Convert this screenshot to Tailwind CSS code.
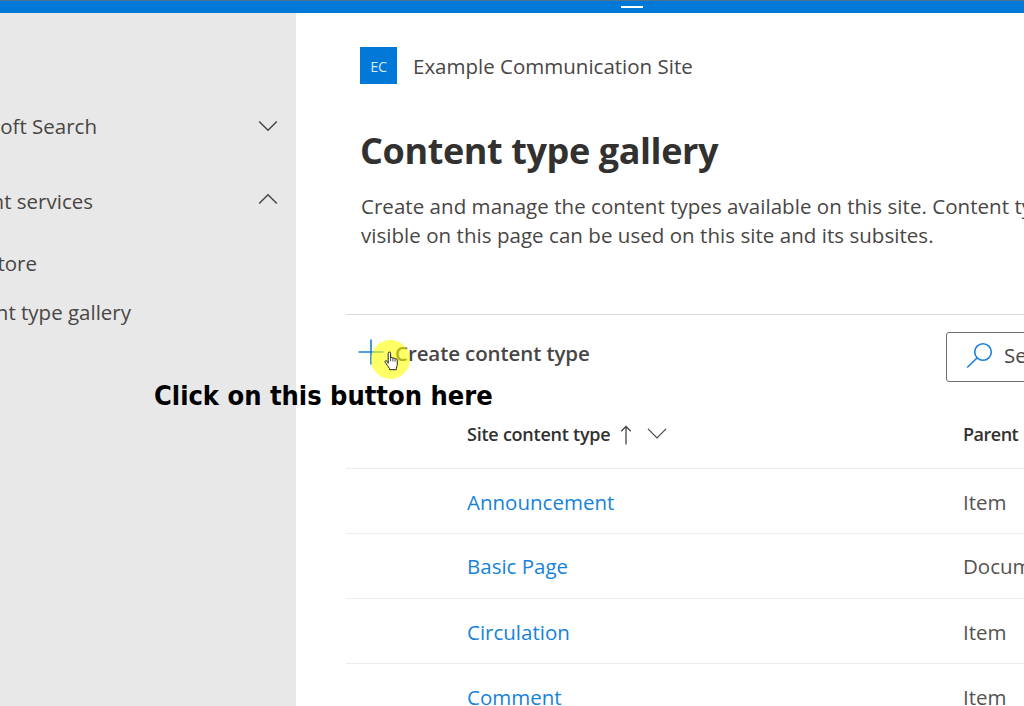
<!DOCTYPE html>
<html lang="en">

<head>
    <meta charset="UTF-8">
    <meta name="viewport" content="width=device-width, initial-scale=1.0">
    <title>Content type gallery</title>
    <script src="https://cdn.jsdelivr.net/npm/@tailwindcss/browser@4"></script>
</head>

<body class="relative h-[706px] w-[1024px] overflow-hidden bg-white font-['Open_Sans',sans-serif] text-[20.5px] leading-[29px] text-[#484644] whitespace-nowrap flex flex-col">

    <!-- top bar -->
    <header class="h-[13px] shrink-0 bg-[#0078d7] border-t border-[#4a7291] pl-[621px] pt-[5px]">
        <div class="h-[2px] w-[22px] bg-white"></div>
    </header>

    <div class="flex grow min-h-0">
        <!-- side navigation -->
        <nav class="w-[296px] shrink-0 overflow-hidden bg-[#e8e8e8] pt-[76px]">
            <div class="flex h-[75px] items-center justify-between pr-[18px]">
                <span class="flex w-[97px] justify-end">Microsoft Search</span>
                <svg class="mb-[2px] h-5 w-5" viewBox="0 0 20 20" fill="none" stroke="#484644" stroke-width="1.5"><path d="M1.2 5.5 10 14.3 18.8 5.5" /></svg>
            </div>
            <div class="flex h-[74px] items-center justify-between pr-[18px]">
                <span class="flex w-[93px] justify-end">Content services</span>
                <svg class="mb-[2px] h-5 w-5" viewBox="0 0 20 20" fill="none" stroke="#484644" stroke-width="1.5"><path d="M1.2 13.5 10 4.7 18.8 13.5" /></svg>
            </div>
            <div class="flex h-[50px] items-center">
                <span class="flex w-[37px] justify-end">Term store</span>
            </div>
            <div class="flex h-[48px] items-center">
                <span class="flex w-[131px] justify-end">Content type gallery</span>
            </div>
        </nav>

        <main class="w-[728px] shrink-0 overflow-hidden pl-[50px]">
            <div class="flex h-[37px] mt-[34px] ml-[14px] items-center gap-4">
                <div class="flex size-[37px] items-center justify-center bg-[#0078d7] pt-px text-[14.5px] tracking-[-0.3px] text-[#d5eafa]">EC</div>
                <span class="pt-px">Example Communication Site</span>
            </div>
            <h1 class="mt-[42px] ml-[14px] h-[50px] text-[36px] leading-[50px] font-bold tracking-[-0.4px] text-[#323130]">Content type gallery</h1>
            <p class="mt-[16px] ml-[15px] h-[122px] tracking-[0.04px]">Create and manage the content types available on this site. Content types<br>visible on this page can be used on this site and its subsites.</p>

            <!-- command bar -->
            <div class="flex h-[86px] border-t border-[#d9d9d9] pt-[17px]">
                <button class="flex h-[42px] w-[600px] shrink-0 items-center pl-[12px] font-semibold tracking-[-0.1px]">
                    <svg class="mb-[2px] h-[26px] w-[26px]" viewBox="0 0 26 26" fill="none" stroke="#1b7fd8" stroke-width="1.6"><path d="M13 .5v25M.5 13h25" /></svg>
                    <span class="ml-[11px]">Create content type</span>
                </button>
                <div class="flex h-[50px] w-[260px] shrink-0 items-center rounded-[3px] border border-[#6f6d6b] pl-[19px] pb-[3px] gap-[11px]">
                    <svg class="h-[27px] w-[27px]" viewBox="0 0 27 27" fill="none" stroke="#1b7fd8" stroke-width="1.6"><circle cx="17" cy="10" r="8.3" /><path d="M11 16 1.2 25.5" /></svg>
                    <span>Search</span>
                </div>
            </div>

            <!-- table -->
            <div class="flex h-[69px] items-center border-b border-[#ededed] pl-[121px] text-[18px] font-semibold tracking-[-0.24px] text-[#323130]">
                <div class="flex w-[496px] shrink-0 items-center">
                    <span class="w-[144px]">Site content type</span>
                    <svg class="ml-[8px] mt-[2px] h-5 w-[14px]" viewBox="0 0 14 20" fill="none" stroke="#484644" stroke-width="1.3"><path d="M7 19.5V1.5M2.2 6.3 7 1.5l4.8 4.8" /></svg>
                    <svg class="ml-[14px] h-5 w-5" viewBox="0 0 20 20" fill="none" stroke="#484644" stroke-width="1.2"><path d="M1 4.8 10 13.8 19 4.8" /></svg>
                </div>
                <span class="tracking-[-0.5px]">Parent</span>
            </div>
            <div class="flex h-[65px] items-center border-b border-[#ededed] pl-[121px] pt-[2px]">
                <span class="w-[496px] shrink-0 text-[#1683d8]">Announcement</span><span class="text-[#555351]">Item</span>
            </div>
            <div class="flex h-[65px] items-center border-b border-[#ededed] pl-[121px] pt-px">
                <span class="w-[496px] shrink-0 text-[#1683d8]">Basic Page</span><span class="text-[#555351]">Document</span>
            </div>
            <div class="flex h-[65px] items-center border-b border-[#ededed] pl-[121px] pt-[2px]">
                <span class="w-[496px] shrink-0 text-[#1683d8]">Circulation</span><span class="text-[#555351]">Item</span>
            </div>
            <div class="flex h-[65px] items-center pl-[121px] pt-[2px]">
                <span class="w-[496px] shrink-0 text-[#1683d8]">Comment</span><span class="text-[#555351]">Item</span>
            </div>
        </main>
    </div>

    <!-- click highlight and pointer -->
    <div class="absolute left-[371px] top-[340px] size-[39px] rounded-full bg-[#ffff00]/60"></div>
    <svg class="absolute left-[384px] top-[351px] h-[20px] w-[16px]" viewBox="0 0 16 20" fill="#fff" stroke="#222" stroke-width="1" stroke-linejoin="round">
        <path d="M4.2 12.2V2.2c0-1.6 2.4-1.6 2.4 0V7c.4-1 2.2-.8 2.3.5.5-.9 2.1-.6 2.2.6.6-.7 2.2-.3 2.2 1.1v4.3c0 1.5-1 2.5-1 4v1.2H5.5v-1.2C4.5 15.5 2.5 13.5 1.2 11.3c-.8-1.4.8-2.2 1.8-1.1z" />
        <path d="M6.6 7v3.3M8.9 7.5v3M11.1 8.2v2.5" stroke-width=".8" />
    </svg>
    <div class="absolute left-[154px] top-[378px] font-['DejaVu_Sans_Condensed','DejaVu_Sans',sans-serif] text-[27px] leading-[36px] font-bold [font-stretch:condensed] text-black">Click on this button here</div>
</body>

</html>
